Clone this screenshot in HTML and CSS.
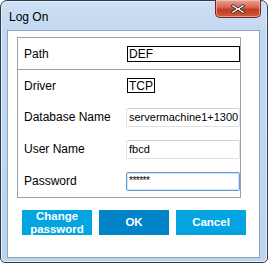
FILE: index.html
```html
<!DOCTYPE html>
<html>
<head>
<meta charset="utf-8">
<link rel="stylesheet" href="styles.css">
</head>
<body>
<div class="window">
  <div class="titlebar">
    <span class="title">Log On</span>
    <div class="close">
      <svg width="18" height="12" viewBox="0 0 18 12">
        <path d="M4 1.5 L9 5 L14 1.5 L16 3 L11 6 L16 9 L14 10.5 L9 7 L4 10.5 L2 9 L7 6 L2 3 Z" fill="#ffffff" stroke="#3a2a2a" stroke-width="1" stroke-linejoin="round"/>
      </svg>
    </div>
  </div>
  <div class="client">
    <div class="group">
      <div class="row row-path">
        <span class="label">Path</span>
        <span class="field field-black field-path">DEF</span>
      </div>
      <div class="divider"></div>
      <div class="row row-first">
        <span class="label">Driver</span>
        <span class="field field-black field-tcp">TCP</span>
      </div>
      <div class="row">
        <span class="label">Database Name</span>
        <span class="field field-soft">servermachine1+1300</span>
      </div>
      <div class="row">
        <span class="label">User Name</span>
        <span class="field field-soft">fbcd</span>
      </div>
      <div class="row">
        <span class="label">Password</span>
        <span class="field field-focus">******</span>
      </div>
    </div>
    <div class="buttons">
      <div class="btn btn-light">Change<br>password</div>
      <div class="btn btn-dark">OK</div>
      <div class="btn btn-light">Cancel</div>
    </div>
  </div>
</div>
</body>
</html>
```

FILE: styles.css
```css
html, body {
  margin: 0;
  padding: 0;
  background: #ffffff;
}
body {
  width: 268px;
  height: 263px;
  overflow: hidden;
  font-family: "Liberation Sans", Arial, sans-serif;
}
.window {
  box-sizing: border-box;
  width: 268px;
  height: 263px;
  border: 1px solid #2e3c50;
  border-radius: 7px 7px 5px 5px;
  background: linear-gradient(to bottom, #cde0f4 0px, #c3d9f1 30px, #bcd4ee 100%);
  padding: 0 7px 4px 6px;
  display: flex;
  flex-direction: column;
  box-shadow: inset 0 0 0 1px #e6f0fa;
}
.titlebar {
  height: 29px;
  display: flex;
  align-items: flex-start;
  justify-content: space-between;
  flex-shrink: 0;
}
.title {
  font-size: 12px;
  color: #000000;
  margin-top: 9px;
  margin-left: 2px;
}
.close {
  width: 46px;
  height: 18px;
  margin-right: -1px;
  margin-top: -1px;
  box-sizing: border-box;
  border: 1px solid #6a2820;
  border-top: none;
  border-radius: 0 0 5px 5px;
  background: linear-gradient(to bottom, #e8a596 0%, #d7624c 45%, #c23a22 55%, #cf5a3e 100%);
  display: flex;
  align-items: center;
  justify-content: center;
  box-shadow: inset 0 0 0 1px rgba(255, 220, 210, 0.5);
}
.close svg {
  display: block;
}
.client {
  flex: 1;
  background: #ffffff;
  border: 1px solid #8ea6c2;
  padding: 6px 0 0 9px;
  display: flex;
  flex-direction: column;
}
.group {
  width: 224px;
  box-sizing: border-box;
  border: 1px solid #a0a0a0;
  display: flex;
  flex-direction: column;
}
.row {
  height: 32px;
  display: flex;
  align-items: center;
  padding-left: 6px;
  font-size: 12px;
  color: #000000;
}
.row-path {
  height: 31px;
}
.row-first {
  height: 31px;
}
.divider {
  height: 1px;
  background: #a0a0a0;
}
.label {
  width: 103px;
  flex-shrink: 0;
}
.field {
  box-sizing: border-box;
  font-size: 11px;
  color: #000000;
  display: flex;
  align-items: center;
  white-space: nowrap;
  overflow: hidden;
}
.field-black {
  border: 1px solid #000000;
  height: 16px;
  padding-left: 1px;
  font-size: 12px;
}
.field-path {
  width: 113px;
}
.field-tcp {
  width: 28px;
  height: 15px;
}
.field-soft {
  margin-left: -1px;
  width: 114px;
  height: 19px;
  border: 1px solid #dde3ea;
  border-top-color: #c9d0d8;
  border-radius: 2px;
  padding-left: 2px;
}
.field-focus {
  margin-left: -1px;
  width: 114px;
  height: 19px;
  border: 1px solid #5f9ed6;
  border-radius: 2px;
  box-shadow: inset 0 0 0 1px #cfe4f7;
  padding-left: 2px;
  font-size: 10px;
  align-items: flex-start;
  padding-top: 2px;
  letter-spacing: -0.5px;
}
.buttons {
  display: flex;
  gap: 7px;
  margin-top: 12px;
  margin-left: 5px;
}
.btn {
  width: 70px;
  height: 25px;
  display: flex;
  align-items: center;
  justify-content: center;
  text-align: center;
  color: #ffffff;
  font-weight: bold;
  font-size: 11.5px;
  line-height: 13px;
}
.btn-light {
  background: #03a4e0;
}
.btn-dark {
  background: #0083c9;
}
```
